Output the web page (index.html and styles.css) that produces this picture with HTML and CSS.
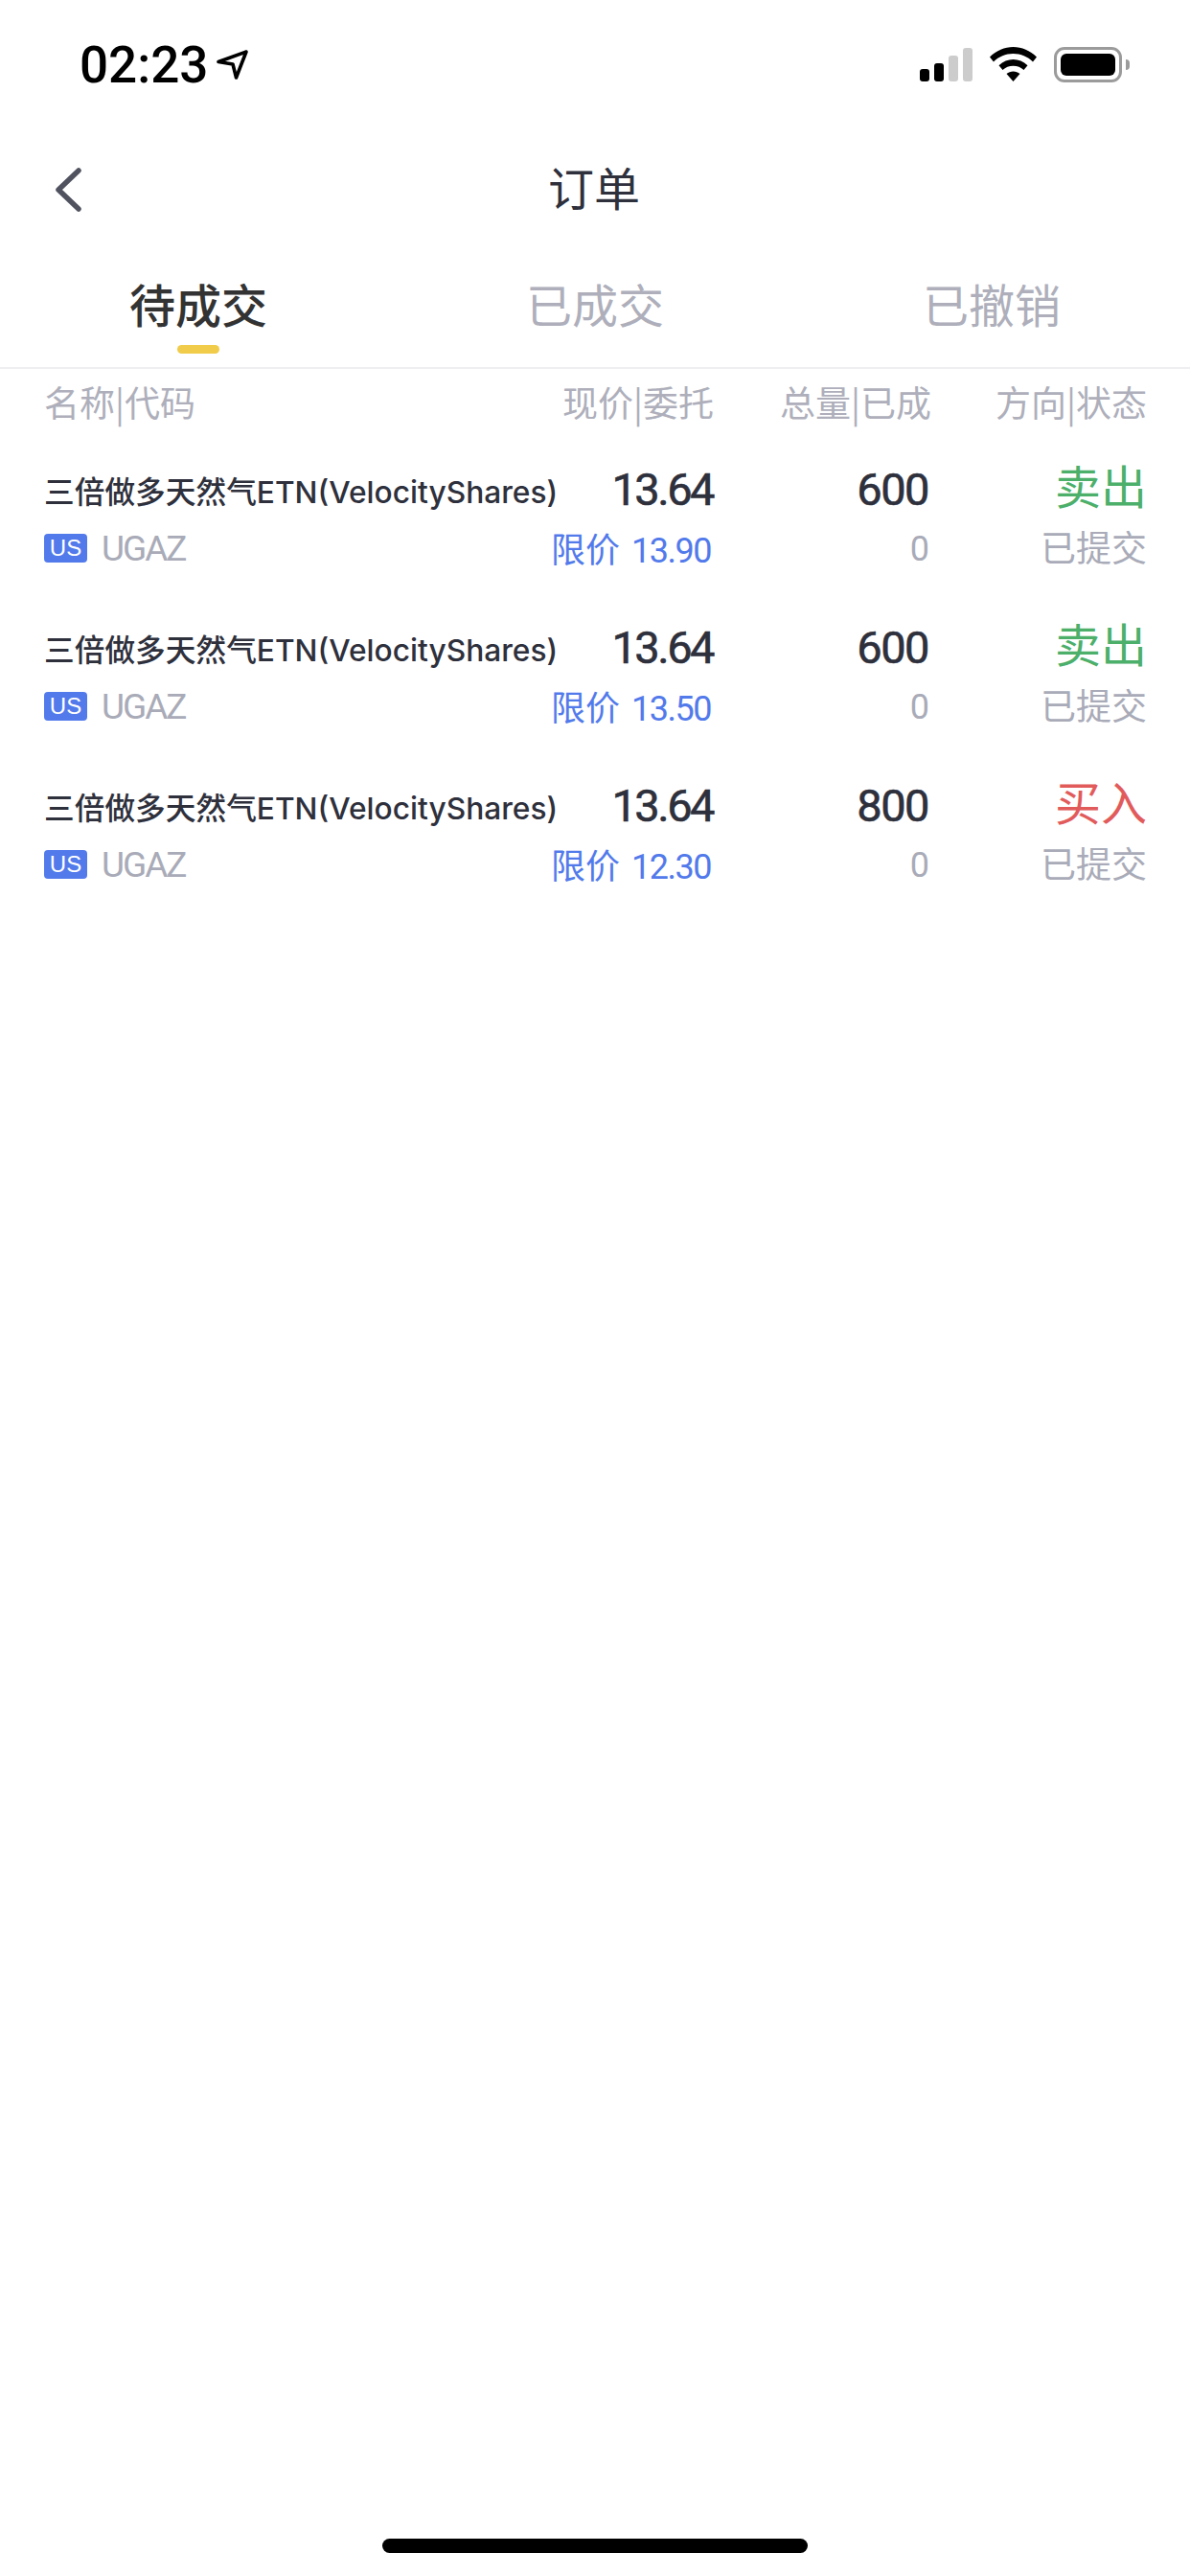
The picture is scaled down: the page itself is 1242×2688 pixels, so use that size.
FILE: index.html
```html
<!DOCTYPE html>
<html lang="zh-CN">
  <head>
    <meta charset="UTF-8" />
    <meta name="viewport" content="width=device-width, initial-scale=1.0" />
    <title>订单</title>
    <link rel="stylesheet" href="styles.css">
  </head>
  <body>
    <div class="phone">
      <!-- Status bar -->
      <div class="status-bar">
        <div class="status-left">
          <span class="clock">02:23</span>
          <svg class="loc-icon" width="33" height="31" viewBox="0 0 33 31">
            <path d="M2 12.5 L31 2 L20.5 29 L17 15 Z" fill="none" stroke="#000" stroke-width="3.6" stroke-linejoin="round" />
          </svg>
        </div>
        <div class="status-right">
          <svg class="signal-icon" width="55" height="35" viewBox="0 0 55 35">
            <rect x="0" y="22" width="10" height="13" rx="3" fill="#000" />
            <rect x="15" y="16" width="10" height="19" rx="3" fill="#000" />
            <rect x="30" y="8" width="10" height="27" rx="3" fill="#ccc" />
            <rect x="45" y="0" width="10" height="35" rx="3" fill="#ccc" />
          </svg>
          <svg class="wifi-icon" width="49" height="36" viewBox="0 0 49 36">
            <path d="M24.5 0 C33.5 0 42 3.6 49 10.5 L45 15.5 C39.5 10 32.5 7 24.5 7 C16.5 7 9.5 10 4 15.5 L0 10.5 C7 3.6 15.5 0 24.5 0 Z" fill="#000" />
            <path d="M24.5 13 C30 13 35 15 39.5 19.2 L35.5 24 C32.5 21.3 28.8 19.8 24.5 19.8 C20.2 19.8 16.5 21.3 13.5 24 L9.5 19.2 C14 15 19 13 24.5 13 Z" fill="#000" />
            <path d="M24.5 25.5 C27 25.5 29.6 26.4 31.5 28 L24.5 36 L17.5 28 C19.4 26.4 22 25.5 24.5 25.5 Z" fill="#000" />
          </svg>
          <div class="battery">
            <div class="battery-body"><div class="battery-fill"></div></div>
            <div class="battery-nub"></div>
          </div>
        </div>
      </div>

      <!-- Nav -->
      <div class="nav">
        <svg class="back-icon" width="28" height="46" viewBox="0 0 28 46">
          <path d="M25 3 L4 23 L25 43" fill="none" stroke="#50535f" stroke-width="5.5" stroke-linecap="round" stroke-linejoin="round" />
        </svg>
        <div class="nav-title">订单</div>
      </div>

      <div class="tabs">
        <div class="tab active">待成交</div>
        <div class="tab">已成交</div>
        <div class="tab">已撤销</div>
      </div>

      <div class="col-head">
        <div>名称|代码</div>
        <div class="right">现价|委托</div>
        <div class="right">总量|已成</div>
        <div class="right">方向|状态</div>
      </div>

      <div class="order">
        <div class="name">三倍做多天然气ETN(VelocityShares)</div>
        <div class="num price right">13.64</div>
        <div class="num right">600</div>
        <div class="side sell right">卖出</div>
        <div class="code"><span class="badge">US</span><span class="symbol">UGAZ</span></div>
        <div class="limit right"><span class="limit-label">限价</span><span class="limit-val">13.90</span></div>
        <div class="filled right">0</div>
        <div class="state right">已提交</div>
      </div>

      <div class="order">
        <div class="name">三倍做多天然气ETN(VelocityShares)</div>
        <div class="num price right">13.64</div>
        <div class="num right">600</div>
        <div class="side sell right">卖出</div>
        <div class="code"><span class="badge">US</span><span class="symbol">UGAZ</span></div>
        <div class="limit right"><span class="limit-label">限价</span><span class="limit-val">13.50</span></div>
        <div class="filled right">0</div>
        <div class="state right">已提交</div>
      </div>

      <div class="order">
        <div class="name">三倍做多天然气ETN(VelocityShares)</div>
        <div class="num price right">13.64</div>
        <div class="num right">800</div>
        <div class="side buy right">买入</div>
        <div class="code"><span class="badge">US</span><span class="symbol">UGAZ</span></div>
        <div class="limit right"><span class="limit-label">限价</span><span class="limit-val">12.30</span></div>
        <div class="filled right">0</div>
        <div class="state right">已提交</div>
      </div>

      <div class="home-bar"></div>
    </div>
  </body>
</html>
```
FILE: styles.css
```css
* {
  box-sizing: border-box;
}
body {
  margin: 0;
  background-color: #fff;
  font-family: "Noto Sans CJK SC", sans-serif;
  color: #2e303c;
}
.phone {
  position: relative;
  width: 1242px;
  height: 2688px;
  overflow: hidden;
  background-color: #fff;
}
.status-bar {
  display: flex;
  justify-content: space-between;
  height: 136px;
  padding: 48px 63px 0 83px;
}
.status-left {
  display: flex;
  align-items: flex-start;
  gap: 9px;
}
.clock {
  font-family: Roboto, sans-serif;
  font-size: 53px;
  font-weight: 500;
  line-height: 40px;
  color: #000;
}
.loc-icon {
  margin-top: 4px;
}
.status-right {
  display: flex;
  align-items: flex-start;
  gap: 18px;
}
.signal-icon {
  margin-top: 2px;
}
.wifi-icon {
  margin-top: 1px;
}
.battery {
  display: flex;
  align-items: center;
  gap: 4px;
  height: 37px;
  margin-top: 1px;
}
.battery-body {
  width: 71px;
  height: 37px;
  padding: 4px;
  border: 3px solid #9b9b9b;
  border-radius: 11px;
}
.battery-fill {
  height: 100%;
  background-color: #000;
  border-radius: 6px;
}
.battery-nub {
  width: 4px;
  height: 11px;
  background-color: #9b9b9b;
  border-radius: 0 4px 4px 0;
}
.nav {
  position: relative;
  height: 124px;
  display: flex;
  justify-content: center;
  padding: 0 2px 8px 0;
  align-items: center;
}
.back-icon {
  position: absolute;
  left: 57px;
  top: 39px;
}
.nav-title {
  font-size: 48px;
  line-height: 112px;
}
.tabs {
  display: grid;
  grid-template-columns: repeat(3, 1fr);
  height: 125px;
  border-bottom: 2px solid #efeff1;
}
.tab {
  position: relative;
  text-align: center;
  font-size: 48px;
  line-height: 113px;
  color: #aeafbb;
}
.tab.active {
  color: #333;
  font-weight: 500;
}
.tab.active::after {
  content: "";
  position: absolute;
  left: 185px;
  top: 100px;
  width: 44px;
  height: 9px;
  background-color: #f0cc4a;
  border-radius: 5px;
}
.col-head,
.order {
  display: grid;
  grid-template-columns: minmax(0, 1fr) 180px 227px 225px;
  padding: 0 45px 0 46px;
}
.col-head {
  height: 74px;
  padding-bottom: 6px;
  align-items: center;
  font-size: 37px;
  color: #aeafbb;
}
.right {
  text-align: right;
}
.order {
  grid-template-rows: 65px 57px;
  height: 165px;
  padding-top: 19px;
  align-items: center;
}
.name {
  font-family: Inter, "Noto Sans CJK SC", sans-serif;
  font-size: 31.7px;
  font-weight: 500;
  white-space: nowrap;
  color: #2e303c;
}
.num {
  padding-right: 3px;
  font-family: Roboto, sans-serif;
  font-size: 47px;
  letter-spacing: -1.5px;
  color: #2e303c;
  -webkit-text-stroke: 0.6px #2e303c;
}
.price {
  padding-right: 1px;
  letter-spacing: -2.5px;
}
.side {
  font-size: 48px;
  line-height: 60px;
  margin-bottom: 12px;
}
.sell {
  color: #4caf6a;
}
.buy {
  color: #e25b5b;
}
.code {
  display: flex;
  align-items: center;
  margin-top: 1px;
}
.badge {
  width: 45px;
  height: 30px;
  background-color: #527aeb;
  border-radius: 4px;
  color: #fff;
  font-family: "Liberation Sans", sans-serif;
  font-size: 24px;
  line-height: 30px;
  text-align: center;
}
.symbol {
  margin-left: 15px;
  font-family: Roboto, sans-serif;
  font-size: 37px;
  letter-spacing: -2px;
  color: #a9abb8;
}
.limit {
  padding-right: 3px;
  margin-bottom: 2px;
  white-space: nowrap;
  color: #527aeb;
}
.limit-label {
  font-size: 36px;
}
.limit-val {
  margin-left: 12px;
  font-family: Roboto, sans-serif;
  font-size: 36px;
  letter-spacing: -1.5px;
}
.filled {
  padding-right: 2px;
  margin-top: 3px;
  font-family: Roboto, sans-serif;
  font-size: 36px;
  color: #a9abb8;
}
.state {
  font-size: 37px;
  line-height: 50px;
  margin-bottom: 4px;
  color: #a9abb8;
}
.home-bar {
  position: absolute;
  left: 399px;
  top: 2649px;
  width: 444px;
  height: 15px;
  background-color: #000;
  border-radius: 8px;
}
```
